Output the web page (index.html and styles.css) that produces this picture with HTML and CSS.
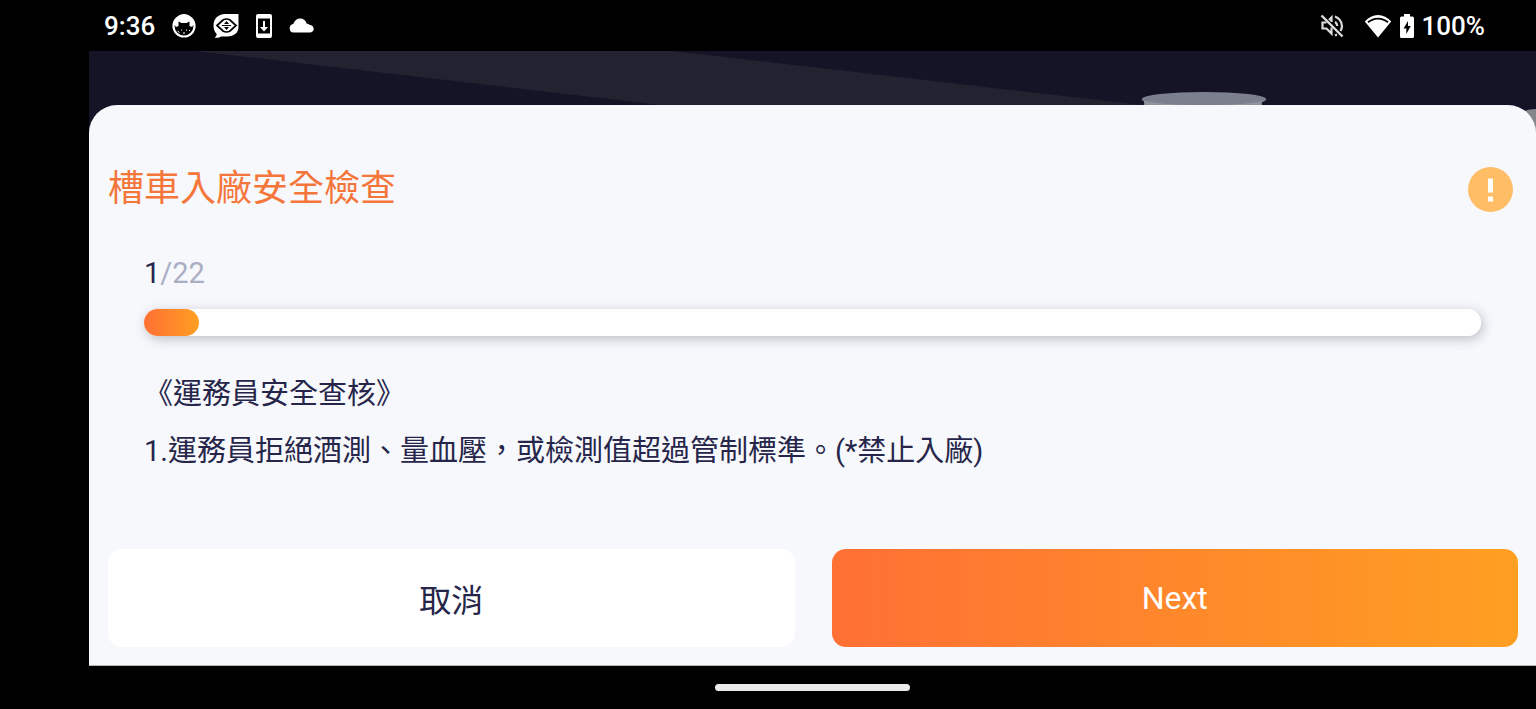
FILE: index.html
```html
<!DOCTYPE html>
<html lang="zh-Hant">
<head>
  <meta charset="UTF-8">
  <meta name="viewport" content="width=device-width, initial-scale=1.0">
  <title>槽車入廠安全檢查</title>
  <link rel="stylesheet" href="styles.css">
</head>
<body>
  <header class="status-bar">
    <div class="status-left">
      <span class="status-text">9:36</span>
      <svg class="icon-cat" width="24" height="24" viewBox="0 0 24 24">
        <circle cx="12" cy="12" r="10.500" fill="none" stroke="#fff" stroke-width="2.200"/>
        <path d="M2 10a10 10 0 0 1 20 0l-2 3-2.500-1V7.500L14.500 9h-5L6.500 7.500V12L4 13z" fill="#fff"/>
        <path d="M5.500 17l2 1.500M9 16h1M14 16h1M11 19h2M17 17l1-1" stroke="#fff" stroke-width="1"/>
      </svg>
      <svg class="icon-eye" width="26" height="24" viewBox="0 0 26 24">
        <path d="M12 0h13.500v13c0 6-5 9.500-11 9.500H8c-2 1.500-4 1.500-6.500 1 1.500-1 2.200-2 2.200-3.500C1.500 18 .5 15 .5 11.500.5 5 5 0 12 0z" fill="#fff"/>
        <path d="M4 11.500l6-5.500q3.500-2 7 0l6 5.500-6 5.500q-3.500 2-7 0z" fill="none" stroke="#000" stroke-width="1.700"/>
        <path d="M13.500 7l2.500 3h-5zM13.500 16l2.500-3h-5z" fill="#000"/>
        <path d="M9 11.500h9" stroke="#000" stroke-width="1"/>
      </svg>
      <svg class="icon-download" width="16" height="24" viewBox="0 0 16 24">
        <path fill-rule="evenodd" d="M2 0h12a2 2 0 0 1 2 2v20a2 2 0 0 1-2 2H2a2 2 0 0 1-2-2V2a2 2 0 0 1 2-2zm0 4.500v15h12v-15z" fill="#fff"/>
        <path d="M7 7h2v6h3l-4 4.500L4 13h3z" fill="#fff"/>
      </svg>
      <svg class="icon-cloud" width="25" height="15" viewBox="0 0 25 15">
        <path d="M4.500 14.500a4.300 4.300 0 0 1-.3-8.500C5.500 2.500 8 .5 11 .5c3.500 0 6 2 6.700 5.200 1 0 2 .2 2.700 1 2.600.2 4.300 1.800 4.300 4 0 2.300-1.700 3.800-4 3.800z" fill="#fff"/>
      </svg>
    </div>
    <div class="status-right">
      <svg class="icon-mute" width="24" height="24" viewBox="0 0 24 24" fill="none" stroke="#ddd" stroke-width="2.200">
        <path d="M1.500 1.500l21 21" stroke-width="2.400"/>
        <path d="M6.500 8.500h-4v6h4l5 5v-6M9 6l2.500-2.500V8"/>
        <path d="M15 8q2 1 2.200 4M15 2.500q6.500 2.500 7 9.500-.2 3-1.500 5M15 21.500l2-1" />
      </svg>
      <svg class="icon-wifi" width="28" height="24" viewBox="0 0 28 24">
        <path d="M14 23.500L.8 7.500C4.500 3.500 9 1 14 1s9.500 2.500 13.200 6.500z" fill="#fff"/>
        <path d="M4 8.300C10 3.300 18 3.300 24 8.300" fill="none" stroke="#000" stroke-width="1.800"/>
      </svg>
      <svg class="icon-battery" width="14" height="24" viewBox="0 0 14 24">
        <path d="M4 0h6v2.500h2.500A1.500 1.500 0 0 1 14 4v18.500a1.500 1.500 0 0 1-1.500 1.500h-11A1.500 1.500 0 0 1 0 22.500V4a1.500 1.500 0 0 1 1.500-1.500H4z" fill="#fff"/>
        <path d="M8 7L3.500 14.500H6.300V20L10.800 12H8z" fill="#000"/>
      </svg>
      <span class="status-text">100%</span>
    </div>
  </header>

  <main class="app">
    <!-- Warehouse scene behind the sheet -->
    <svg class="scene scene-beam" viewBox="0 0 1447 90" preserveAspectRatio="xMinYMin slice">
      <path d="M106 0H583L1053 54 1366 90H886L571 54z" fill="#232230"/>
    </svg>
    <svg class="scene scene-tank" width="394" height="90" viewBox="0 0 394 90">
      <path d="M2 50h118l-2 40H4z" fill="#8f909a"/>
      <ellipse cx="62" cy="48" rx="62" ry="7" fill="#7c7f8e"/>
      <path d="M0 48c0 9 124 9 124 0" fill="none" stroke="#9698a2" stroke-width="1"/>
      <path d="M364 74Q376 58 394 58V90H364z" fill="#85868c"/>
    </svg>

    <section class="sheet">
      <div class="sheet-header">
        <h1>槽車入廠安全檢查</h1>
        <button class="warn-btn" type="button" aria-label="注意">
          <svg width="45" height="45" viewBox="0 0 45 45">
            <circle cx="22.500" cy="22.500" r="22.500" fill="#ffbd66"/>
            <path d="M20 11.500h5v14h-5zM20 29.500h5v5h-5z" fill="#fff"/>
          </svg>
        </button>
      </div>

      <div class="content">
        <label class="counter" for="progress"><span class="current">1</span>/22</label>
        <progress class="progress" id="progress" max="100" value="4.1"></progress>
        <div class="question">
          <p>《運務員安全查核》</p>
          <p>1.運務員拒絕酒測、量血壓，或檢測值超過管制標準。(*禁止入廠)</p>
        </div>
      </div>

      <div class="actions">
        <button class="btn btn-cancel" type="button">取消</button>
        <button class="btn btn-next" type="button">Next</button>
      </div>
    </section>
  </main>

  <footer class="nav-bar">
    <div class="nav-handle"></div>
  </footer>
</body>
</html>
```
FILE: styles.css
```css
* {
  box-sizing: border-box;
}

body {
  margin: 0;
  min-height: 100vh;
  display: flex;
  flex-direction: column;
  background: #000;
  color: #26264a;
  font-family: Roboto, "Noto Sans CJK TC", sans-serif;
}

h1,
p {
  margin: 0;
  font-weight: 400;
}

svg {
  display: block;
}

/* Status bar */
.status-bar {
  height: 51px;
  padding: 0 51px 0 104px;
  display: flex;
  justify-content: space-between;
  align-items: center;
  color: #fff;
}

.status-left,
.status-right {
  display: flex;
  align-items: center;
}

.status-left {
  gap: 17px;
}

.status-right {
  gap: 8px;
}

.icon-mute {
  margin-right: 12px;
}

.status-text {
  font-size: 26px;
  font-weight: 500;
  line-height: 32px;
}

/* App area */
.app {
  flex: 1;
  position: relative;
  display: flex;
  flex-direction: column;
  margin-left: 89px;
  padding-top: 54px;
  background: #151326;
}

.scene {
  position: absolute;
  top: 0;
}

.scene-beam {
  left: 0;
  width: 100%;
  height: 90px;
}

.scene-tank {
  right: 0;
}

.sheet {
  flex: 1;
  position: relative;
  display: flex;
  flex-direction: column;
  padding: 62px 18px 18px 19px;
  background: #f6f8fc;
  border-bottom: 1px solid #b5b7ba;
  border-radius: 28px 28px 0 0;
}

.sheet-header {
  display: flex;
  justify-content: space-between;
  align-items: center;
  padding-right: 5px;
}

.sheet-header h1 {
  color: #f5763b;
  font-size: 36px;
  line-height: 45px;
}

.warn-btn {
  padding: 0;
  border: none;
  background: none;
  cursor: pointer;
}

.content {
  display: flex;
  flex-direction: column;
  padding: 43px 37px 0 36px;
}

.counter {
  color: #a9aec4;
  font-size: 29px;
  line-height: 36px;
}

.counter .current {
  color: #26264a;
}

.progress {
  appearance: none;
  width: 100%;
  height: 27px;
  margin-top: 18px;
  border: none;
  border-radius: 14px;
  background: #fff;
  box-shadow: 2px 3px 12px rgba(40, 40, 60, 0.28);
}

.progress::-webkit-progress-bar {
  border-radius: 14px;
  background: #fff;
}

.progress::-webkit-progress-value {
  border-radius: 14px;
  background: linear-gradient(90deg, #ff7034, #ff9f22);
}

.question {
  margin-top: 30px;
  font-size: 29px;
  line-height: 57px;
}

/* Buttons */
.actions {
  display: grid;
  grid-template-columns: 1fr 1fr;
  gap: 37px;
  margin-top: auto;
}

.btn {
  height: 98px;
  border: none;
  border-radius: 14px;
  font-family: inherit;
  font-size: 32px;
  cursor: pointer;
}

.btn-cancel {
  background: #fff;
  color: #26264a;
}

.btn-next {
  background: linear-gradient(90deg, #ff7034, #ff9f22);
  color: #fff;
}

/* Navigation bar */
.nav-bar {
  height: 43px;
  margin-left: 89px;
  display: flex;
  justify-content: center;
  align-items: center;
}

.nav-handle {
  width: 195px;
  height: 7px;
  border-radius: 4px;
  background: #ebebeb;
}
```
